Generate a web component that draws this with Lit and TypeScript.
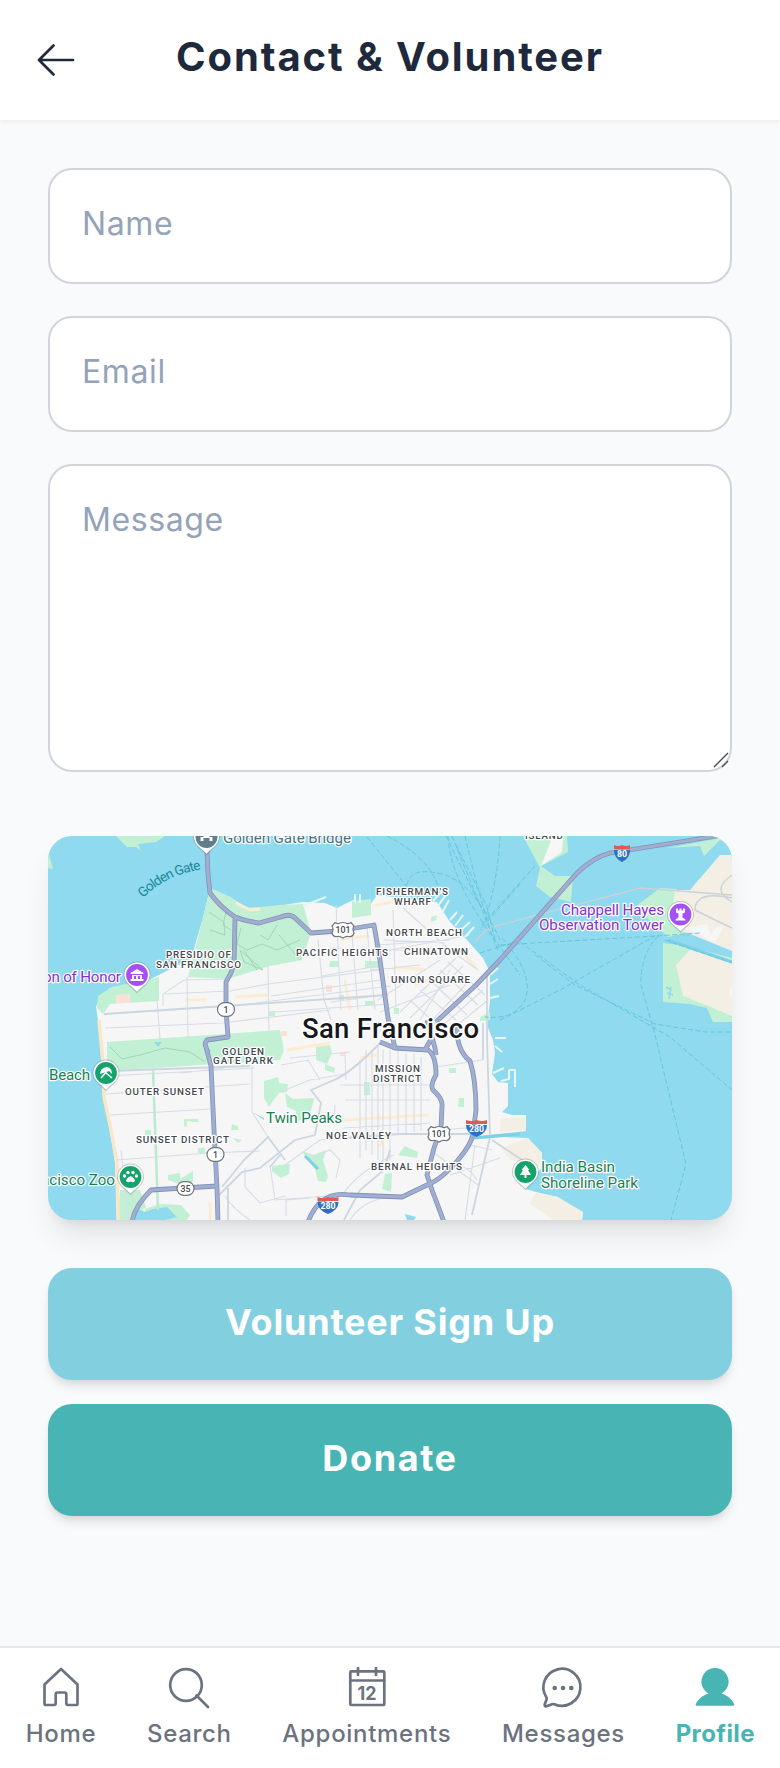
import { LitElement, html, svg, css } from "lit";
import { customElement, property } from "lit/decorators.js";

@customElement("city-map")
class CityMap extends LitElement {
  static styles = css`
    :host { display: block; height: 384px; border-radius: 24px; overflow: hidden; background: #8fdaee; }
    svg { display: block; width: 684px; height: 384px; }
    text { font-family: Roboto, sans-serif; paint-order: stroke; stroke: #fff; stroke-width: 2.4px; stroke-linejoin: round; }
    .area { font-size: 9.8px; font-weight: 500; fill: #44484c; }
    .city { font-size: 27.5px; font-weight: 500; fill: #16191c; stroke-width: 3px; }
    .poi { font-size: 15.2px; }
    .violet { fill: #8430ce; }
    .green { fill: #188055; }
    .slate { fill: #49717f; }
    .water { font-size: 13.5px; fill: #1a8798; stroke: none; }
    .shield { font-size: 8.8px; font-weight: 500; fill: #444b52; stroke: none; text-anchor: middle; }
    .inter { fill: #fff; font-weight: 700; }
    .minor { fill: none; stroke: #d6dde6; stroke-width: 1.1; }
    .mid { fill: none; stroke: #ccd5e0; stroke-width: 1.8; }
    .edge { fill: none; stroke: #8491b8; stroke-width: 4.800; stroke-linejoin: round; }
    .road { fill: none; stroke: #a0aed1; stroke-width: 3.2; stroke-linejoin: round; }
    .ferry { fill: none; stroke: #66c5de; stroke-width: 1; stroke-dasharray: 5 2.500; }
    .park { fill: #c2f0d4; }
    .sand { fill: #f4efe4; }
    .land { fill: #f6f6f6; }
    .warm { fill: none; stroke: #fbecd2; stroke-width: 3; }
    .trail { fill: none; stroke: #a3d3b9; stroke-width: 1; }
  `;

  private area(x: number, y: number, w: number, s: string) {
    return svg`<text class="area" x=${x} y=${y} textLength=${w}>${s}</text>`;
  }

  private pin(x: number, y: number, color: string, glyph: unknown) {
    return svg`<g transform="translate(${x} ${y})">
      <path d="M0 18.500C-3 14-13.500 9-13.500 0A13.500 13.500 0 0 1 13.500 0C13.500 9 3 14 0 18.500Z" fill="#6d7d86" opacity=".4"/>
      <path d="M0 16.800C-3 12.500-12.600 8.500-12.600 0A12.600 12.600 0 0 1 12.600 0C12.600 8.500 3 12.500 0 16.800Z" fill="#fff"/>
      <circle r="10.900" fill=${color}/>${glyph}</g>`;
  }

  private oval(x: number, y: number, s: string) {
    return svg`<rect x=${x - 8.5} y=${y - 6.8} width="17" height="13.600" rx="6.800" fill="#fff" stroke="#6f767c" stroke-width="1.200"/>
      <text class="shield" x=${x} y=${y + 3.2}>${s}</text>`;
  }

  private us(x: number, y: number) {
    return svg`<path transform="translate(${x} ${y})" d="M-8-7.500Q-5-5.500-3-7Q0-8 3-7Q5-5.500 8-7.500L11-4Q9-1 11 3Q10 7 6 6.500Q3 6 0 8Q-3 6-6 6.500Q-10 7-11 3Q-9-1-11-4Z" fill="#fff" stroke="#6f767c" stroke-width="1.200"/>
      <text class="shield" x=${x} y=${y + 3.2} textLength="15" lengthAdjust="spacingAndGlyphs">101</text>`;
  }

  private interstate(x: number, y: number, s: string, w: number) {
    return svg`<g transform="translate(${x} ${y})">
      <path d=${`M${-w}-3H${w}Q${w} 5 0 9Q${-w} 5 ${-w}-3Z`} fill="#2f6fc0"/>
      <path d=${`M${-w}-3V-8Q${-w / 2}-6 0-8Q${w / 2}-6 ${w}-8V-4H${-w}Z`} fill="#df5a55"/>
      <text class="shield inter" y="4">${s}</text></g>`;
  }

  render() {
    const roads = [
      "M207 850L208 874L210 893Q220 907 235 917Q245 921 259 923L281 917Q290 913 295 918L311 933L338 931L374 925L380 960L388 1018L395 1048",
      "M235 919L234 965Q231 974 226 982L226 1010L228 1037L207 1040Q204 1044 206 1047L211 1066L214 1130L217 1188L218 1222",
      "M132 1222Q134 1207 151 1190L217 1186",
      "M734 833L692 840L610 853Q594 857 577 873L500 960L476 985L436 1022",
      "M380 1042L395 1048L428 1050Q436 1055 436 1075Q430 1085 433 1090Q443 1099 442 1106L441 1128L434 1148L427 1175L432 1190L444 1222",
      "M457 1025Q456 1050 470 1061Q476 1080 476 1110L473 1134Q471 1145 458 1160Q441 1180 427 1185L402 1197L350 1195Q320 1190 308 1222",
      "M427 1020L435 1048L436 1055M425 1050L431 1039",
    ];
    return html`<svg viewBox="48 836 684 384" role="img" aria-label="San Francisco">
      <g class="park">
        <path d="M116 836L127 847H136L141 851L138 844L156 842L165 836ZM48 850L53 869L48 868Z"/>
        <path d="M523 836L540 868L536 886L550 897L571 902L573 876L555 876L541 866L568 852L567 836ZM667 848L700 846L704 856L720 840L732 845V836Z"/>
        <path d="M635 907L660 888L677 889L676 914L686 933L668 937ZM663 943L685 946L732 958V1022H713L707 1008L690 1004L663 1002Z"/>
      </g>
      <path class="land" d="M541 866L552 838L563 839L562 852Z"/>
      <path class="sand" d="M675 890L690 890L720 855L732 855V951L700 938L680 930L671 918ZM676 965L690 950L732 962V1016L706 1005L683 996Z"/>
      <path class="land" d="M686 928L707 924L711 935L716 927L724 926L715 943ZM732 984V999L729 994Z"/>
      <path d="M666 987L671 990M667 993L673 995M671 987L669 999" fill="none" stroke="#8fdaee" stroke-width="1.500"/>
      <path class="land" d="M210 888L230 897L247 908L270 907L303 902L325 903L337 908L353 900L370 905L377 895L437 902L450 922L467 940L483 958L490 972V1002L487 1025L493 1040L495 1053L492 1074L498 1082L508 1083V1106L502 1112L512 1115H526V1131L480 1136L528 1138L542 1153L542 1167L526 1189L536 1192L558 1197L570 1207L583 1212L582 1220H117L115 1163L110 1130L103 1097L102 1063L98 1020L96 1007L100 997L110 988L143 983L192 958L195 945L203 918Z"/>
      <path class="sand" d="M501 1148L528 1138L542 1153V1165L528 1164L510 1160ZM535 1193L558 1197L583 1212L582 1220H553L530 1204ZM501 1118L526 1117V1130L500 1132ZM505 1152L490 1138Z"/>
      <g class="park">
        <path d="M210 888L230 897L247 908L281 905L303 904L311 933L302 960L270 966L228 979L188 977L203 918ZM98 996L112 987L159 977V1001L110 1004L103 1014L97 1008ZM352 901L371 899V915L352 918Z"/>
        <path d="M107 1042L280 1030L284 1050L280 1060L107 1071ZM120 1190L140 1190L146 1207L132 1220H118ZM145 1209L160 1204L181 1205L190 1215L187 1220H145Z"/>
        <path d="M264 1081L278 1077L279 1083L288 1084L287 1092L279 1093L273 1101L269 1107L264 1098ZM285 1093L293 1099L314 1098L311 1111L304 1112L300 1121L295 1119L296 1111L287 1107ZM297 1143L302 1151L314 1155L326 1150L323 1160L328 1176L326 1182L318 1181L315 1169L305 1156ZM272 1166L290 1164L289 1174L281 1178L272 1171ZM365 961H380V968H365ZM330 961H339V967H329ZM398 1155L405 1146L418 1152L417 1158ZM385 1174L392 1173L391 1192L382 1189ZM459 1098H464V1107H458ZM364 1082H370V1095H364ZM449 1068H456V1073H449ZM168 1175L180 1173L180 1179L193 1171V1181L188 1188L180 1184L168 1180Z"/>
        <path d="M184 1119H198V1122H194L187 1121V1127L184 1126ZM232 1124L238 1126V1130H231ZM198 1148H205V1153H198ZM145 1130H151V1135H145ZM233 1138L242 1140L238 1143ZM316 1047L330 1045L332 1053L327 1064L316 1060ZM325 1064L335 1068L334 1073L325 1070ZM431 917L437 915L436 920L431 922ZM339 995H344V1001H339ZM365 1001H375V1005H365ZM394 1008H399V1014H394ZM480 1017L490 1012V1020L480 1021ZM269 1011H275V1016H269Z"/>
      </g>
      <g fill="#fbe0da"><path d="M116 995L130 994V1003H116ZM326 985H332V992H326ZM340 1052H346V1056H340ZM281 1031H287V1036H281Z"/></g>
      <path d="M99 1020L103 1063L104 1097L111 1130L117 1163L118 1220" fill="none" stroke="#fbe7c6" stroke-width="3.500"/>
      <path class="warm" d="M236 903L250 910L260 909M185 1000H207M235 997L268 995M340 939L370 936M342 1120L429 1115M392 968Q405 967 425 970M415 952L432 947M287 1050L330 1043M465 955L476 968M375 905L405 900M345 980L350 1010M379 1147L390 1130M360 1058L377 1055M415 985L435 978M210 1202V1220"/>
      <g fill="#8fdaee"><path d="M136 1208L145 1212L153 1209L167 1207L177 1217L165 1220H132ZM154 1042L162 1042L158 1047ZM206 1046L211 1050L209 1055ZM252 1112L264 1118V1120ZM405 1214L416 1217L414 1220H407Z"/></g>
      <path class="minor" d="M105 1028L222 1023L330 1010M104 1014L156 1011L240 1005L390 986M157 1001L160 1039M187 977L188 1038M268 966L269 1032M165 994L230 991L268 984L380 970M163 1006V994L184 980L230 979M108 1076L254 1068M106 1094L250 1084M110 1115L212 1109M117 1160L208 1153L260 1151M121 1150L129 1220M181 1073L224 1068M252 1065V1112L268 1137L253 1152M318 940L324 1000L331 1020M336 905L341 1010M352 935L358 1010M367 928L375 1010M393 910L396 1008M403 908L450 950L478 970M380 952L470 935M370 970L420 965M271 996L380 980M275 1012L388 1004M372 1052V1155M378 1045V1160M383 1050V1170M390 1050V1160M398 1050V1134M406 1053V1133M414 1054V1132M421 1057V1131M366 1050V1150M345 1055L346 1080M281 1065L308 1060L320 1080M290 1058L350 1052M340 1085H430M345 1100H430M343 1128L430 1123M280 1092L310 1080L345 1074M436 1067L482 1060M439 1130L480 1127M286 1216V1200L310 1198M360 1060L360 1158M335 1105L334 1120M310 1158L330 1150L340 1160L336 1178M342 1195Q360 1170 394 1155M350 1220Q365 1195 410 1195M470 1145L492 1150M430 1150L478 1185M450 1175L500 1158M475 1145L465 1220M455 1163Q470 1168 477 1180M420 1020L450 970M410 1018L463 966M400 1012L456 958M425 1028L470 980M432 1035L483 990M445 1035L488 1000M420 990L456 1020M430 980L467 1015M440 970L478 1005M448 962L485 995M410 1000L448 1035M225 1196Q232 1208 250 1220M245 1168V1187L260 1203L285 1196M285 1165L320 1140L345 1138M378 945L450 940M378 1000L440 960M380 1012L450 985M384 940L445 943M330 948L415 950M322 976L378 966M331 1002L382 995M270 1165L275 1200L340 1195"/>
      <path class="mid" d="M104 1014L240 1005L388 995M110 1071L250 1066M381 1042Q350 1074 334 1080L311 1090L321 1103L315 1135L295 1140L260 1168L242 1172L218 1196M222 1187L244 1160L268 1137L285 1160M345 1138L400 1134L470 1134M487 970V1040L490 1137L472 1215M492 1140L525 1162M228 1188V1220M270 1167L280 1155M344 1220L360 1190L384 1170L390 1150M483 1023V1060"/>
      <path d="M153 1070L158 1210" fill="none" stroke="#bce9d1" stroke-width="2.500"/>
      <path class="trail" d="M110 1047L122 1059L140 1055L165 1048L190 1052L205 1062M218 905L226 912L223 925L231 930M241 928L237 944L247 950L262 944L277 950L300 940M240 950L263 970L244 962ZM244 950L257 970M277 925L268 940L260 935M279 935L300 960M210 930L225 935L224 922L209 912"/>
      <path d="M474 1138L520 1134M668 940L732 962M305 1156L318 1169" fill="none" stroke="#7dd0e6" stroke-width="3"/>
      <path d="M500 925L640 888L732 895M475 943Q485 927 500 925M732 875Q710 890 732 902M732 898Q695 890 695 910L715 920L732 928" fill="none" stroke="#cbd1d8" stroke-width="1.400"/>
      <path d="M433 901L441 892M437 907L446 895M442 913L449 900M450 920L457 912M455 926L463 915M460 931L470 922M465 937L474 927M490 975L498 968M490 984L498 979M490 998L499 996M495 1038H506M495 1046L502 1052M493 1073L504 1068M509 1070H515V1087M509 1070V1079L501 1081M355 894V903M360 894V903M303 906L326 897" fill="none" stroke="#e6f7f2" stroke-width="2"/>
      <path class="ferry" d="M367 837L407 887L424 901M387 836Q435 860 440 895M407 885Q410 865 445 875Q475 885 500 940M448 836Q450 880 495 940L520 975M452 836L480 905M465 836Q475 880 490 930M500 836Q498 880 485 920M446 836L480 905L498 950M456 845L487 907L495 940M482 925L535 866M520 884L480 930M480 953L520 940M500 945L655 936L700 933M502 938Q535 975 525 1000Q515 1020 485 1017M520 942L580 985L670 1037L732 1090M500 1020L560 990L655 936M658 936Q640 955 641 985L655 1035L686 1164L671 1220M535 955L575 985L655 1024L705 1032H732M665 940L732 963"/>
      ${roads.map((d) => svg`<path class="edge" d=${d}/>`)}
      ${roads.map((d) => svg`<path class="road" d=${d}/>`)}
      ${this.oval(226, 1009.500, "1")}${this.oval(215.500, 1154.500, "1")}${this.oval(185.500, 1188.500, "35")}
      ${this.us(343, 930)}${this.us(439, 1134)}
      ${this.interstate(622, 853, "80", 8)}${this.interstate(476.500, 1128, "280", 10.500)}${this.interstate(328, 1205, "280", 10.500)}
      ${this.area(166, 958, 65, "PRESIDIO OF")}${this.area(156, 968, 85, "SAN FRANCISCO")}
      ${this.area(376, 895, 72, "FISHERMAN'S")}${this.area(394, 904.500, 37, "WHARF")}
      ${this.area(386, 935.500, 76, "NORTH BEACH")}${this.area(296, 955.500, 92, "PACIFIC HEIGHTS")}
      ${this.area(404, 955, 64, "CHINATOWN")}${this.area(391, 982.500, 79, "UNION SQUARE")}
      ${this.area(222, 1054.500, 42, "GOLDEN")}${this.area(213, 1064, 60, "GATE PARK")}
      ${this.area(125, 1094.500, 79, "OUTER SUNSET")}${this.area(136, 1143, 93, "SUNSET DISTRICT")}
      ${this.area(375, 1072, 45, "MISSION")}${this.area(373, 1081.500, 48, "DISTRICT")}
      ${this.area(326, 1139, 65, "NOE VALLEY")}${this.area(371, 1169.500, 91, "BERNAL HEIGHTS")}
      ${this.area(525, 838.500, 38, "ISLAND")}
      <text class="city" x="302" y="1038" textLength="177">San Francisco</text>
      <text class="poi slate" x="223" y="842.500" textLength="128">Golden Gate Bridge</text>
      <text class="poi violet" x="43" y="982" textLength="78">on of Honor</text>
      <text class="poi violet" x="561" y="915" textLength="103">Chappell Hayes</text>
      <text class="poi violet" x="539" y="929.500" textLength="125">Observation Tower</text>
      <text class="poi green" x="49" y="1080" textLength="41">Beach</text>
      <text class="poi green" x="41" y="1184.500" textLength="74">ncisco Zoo</text>
      <text class="poi green" x="266" y="1123" textLength="76">Twin Peaks</text>
      <text class="poi green" x="541" y="1172" textLength="74">India Basin</text>
      <text class="poi green" x="541" y="1187.500" textLength="97">Shoreline Park</text>
      <path id="gate" d="M143 898Q165 875 203 869" fill="none"/>
      <text class="water"><textPath href="#gate" textLength="66">Golden Gate</textPath></text>
      ${this.pin(206.500, 837, "#607d8b", svg`<path d="M-6 4V0H-3V-4H-6V-6H6V-4H3V0H6V4H3V1H-3V4Z" fill="#fff"/>`)}
      ${this.pin(137, 975, "#a450f5", svg`<path d="M-6.500-2L0-6L6.500-2V-1H-6.500ZM-5 0H5V4H3V1H1V4H-1V1H-3V4H-5ZM-6.500 4H6.500V6H-6.500Z" fill="#fff"/>`)}
      ${this.pin(680.500, 914.500, "#a450f5", svg`<path d="M-4.500-6H-2.500V-4H-1V-6H1V-4H2.500V-6H4.500V-2L2-1V3L5 5V6H-5V5L-2 3V-1L-4.500-2Z" fill="#fff"/>`)}
      ${this.pin(106, 1073, "#15a36b", svg`<path d="M-6 1Q-6-5 1-6Q6-5 6 1L3-2Z" fill="#fff"/><path d="M1-2L-5 5M0 0L6 5" stroke="#fff" stroke-width="1.500"/>`)}
      ${this.pin(130.500, 1177, "#15a36b", svg`<path d="M-4.500 4Q-4 1 0-1Q4 1 4.500 4Q3 6 0 4.500Q-3 6-4.500 4Z" fill="#fff"/><g fill="#fff"><circle cx="-6" cy="-1" r="1.700"/><circle cx="-2.500" cy="-4.500" r="1.700"/><circle cx="2.500" cy="-4.500" r="1.700"/><circle cx="6" cy="-1" r="1.700"/></g>`)}
      ${this.pin(525.500, 1172, "#15a36b", svg`<path d="M0-7L4-2H2.500L5.500 3H1V6H-1V3H-5.500L-2.500-2H-4Z" fill="#fff"/>`)}
    </svg>`;
  }
}

const icons: Record<string, unknown> = {
  home: svg`<path d="M24 5L40.500 20.500V39.500Q40.500 41 39 41H31Q29.300 41 29.300 39.300V30.200Q29.300 28.500 27.600 28.500H20.400Q18.700 28.500 18.700 30.200V39.300Q18.700 41 17 41H9Q7.500 41 7.500 39.500V20.500Z"/>`,
  search: svg`<circle cx="21" cy="21" r="15.800"/><path d="M31.500 31.500L43 43"/>`,
  calendar: svg`<rect x="7.300" y="7.300" width="34" height="33.700" rx="1"/><path d="M7.300 16.500H41.300M15 4V11M33 4V11"/><text class="day" x="14.500" y="36" textLength="19" lengthAdjust="spacingAndGlyphs">12</text>`,
  chat: svg`<path d="M7.300 33.200A18.500 18.500 0 1 1 15.400 40.200Q14.200 39.800 13 40.200L7.500 42.300Q5.500 42.700 5.700 40.500L7.700 35Q8 34.200 7.300 33.200Z"/><g class="dots"><circle cx="15.700" cy="24" r="2.300"/><circle cx="24" cy="24" r="2.300"/><circle cx="32.300" cy="24" r="2.300"/></g>`,
  person: svg`<path class="solid" d="M17.500 29.500A13.600 13.600 0 1 1 30.500 29.500C36 31.200 40.800 35 43.200 40Q43.800 41.800 42 41.800H6Q4.200 41.800 4.800 40C7.200 35 12 31.200 17.500 29.500Z"/>`,
};

@customElement("nav-item")
class NavItem extends LitElement {
  @property() icon = "";
  @property() label = "";
  @property({ type: Boolean, reflect: true }) active = false;
  static styles = css`
    :host { display: flex; flex-direction: column; align-items: center; color: #6b7280; }
    :host([active]) { color: #48b4b4; }
    svg { width: 48px; height: 48px; fill: none; stroke: currentColor; stroke-width: 2.700; stroke-linecap: round; stroke-linejoin: round; }
    .dots, .solid { fill: currentColor; stroke: none; }
    .day { fill: currentColor; stroke: none; font: 700 19px Inter, sans-serif; }
    .label { margin-top: 6px; font: 500 24px/32px Inter, sans-serif; letter-spacing: .7px; margin-right: -.7px; white-space: nowrap; }
    :host([active]) .label { font-weight: 700; letter-spacing: .4px; }
  `;
  render() {
    return html`<svg viewBox="0 0 48 48">${icons[this.icon]}</svg><span class="label">${this.label}</span>`;
  }
}

@customElement("app-root")
class AppRoot extends LitElement {
  static styles = css`
    :host { display: flex; flex-direction: column; height: 1768px; background: #f9fafc; font-family: Inter, sans-serif; }
    * { box-sizing: border-box; }
    header { height: 120px; flex: none; display: grid; grid-template-columns: 48px 1fr 48px; align-items: center; padding: 0 32px; background: #fff; box-shadow: 0 2px 4px rgba(0, 0, 0, .05); }
    header svg { width: 48px; height: 48px; fill: none; stroke: #1e293b; stroke-width: 2.700; stroke-linecap: round; stroke-linejoin: round; }
    h1 { margin: 0 0 7px; text-align: center; font-size: 40px; line-height: 56px; font-weight: 700; color: #1e293b; white-space: nowrap; letter-spacing: 1.9px; }
    main { flex: 1; padding: 48px; display: flex; flex-direction: column; }
    form { display: grid; gap: 32px; }
    input, textarea { display: block; width: 100%; margin: 0; border: 2px solid #d1d5db; border-radius: 24px; background: #fff; font: 400 32px/48px Inter, sans-serif; letter-spacing: .6px; outline: none; }
    input { height: 116px; padding: 29px 32px 35px; }
    textarea { height: 308px; padding: 30px 32px; resize: none; }
    ::placeholder { color: #94a3b8; opacity: 1; }
    .area { position: relative; }
    .grip { position: absolute; right: 2px; bottom: 3px; width: 18px; height: 18px; stroke: #4a4a4a; stroke-width: 1.400; }
    city-map { margin-top: 64px; box-shadow: 0 20px 30px -6px rgba(0, 0, 0, .1), 0 8px 12px -8px rgba(0, 0, 0, .1); }
    .actions { display: grid; gap: 24px; margin-top: 48px; }
    button { height: 112px; border: 0; border-radius: 24px; padding: 0 0 4px; color: #fff; font: 700 36px/56px Inter, sans-serif; letter-spacing: .8px; box-shadow: 0 8px 12px -2px rgba(0, 0, 0, .1), 0 4px 8px -4px rgba(0, 0, 0, .1); }
    .sky { background: #82d0df; }
    .teal { background: #48b4b4; letter-spacing: 1.6px; }
    nav { height: 122px; flex: none; display: flex; justify-content: space-around; padding-top: 16px; border-top: 2px solid #e5e7eb; background: #fff; }
  `;
  render() {
    return html`
      <header>
        <svg viewBox="0 0 48 48"><path d="M41 24H7M21.500 9.500L7 24L21.500 38.500"/></svg>
        <h1>Contact &amp; Volunteer</h1>
      </header>
      <main>
        <form>
          <input placeholder="Name" />
          <input placeholder="Email" />
          <div class="area">
            <textarea placeholder="Message"></textarea>
            <svg class="grip" viewBox="0 0 18 18"><path d="M2 16L16 2M10 16L16 10"/></svg>
          </div>
        </form>
        <city-map></city-map>
        <div class="actions">
          <button class="sky">Volunteer Sign Up</button>
          <button class="teal">Donate</button>
        </div>
      </main>
      <nav>
        <nav-item icon="home" label="Home"></nav-item>
        <nav-item icon="search" label="Search"></nav-item>
        <nav-item icon="calendar" label="Appointments"></nav-item>
        <nav-item icon="chat" label="Messages"></nav-item>
        <nav-item icon="person" label="Profile" active></nav-item>
      </nav>`;
  }
}
